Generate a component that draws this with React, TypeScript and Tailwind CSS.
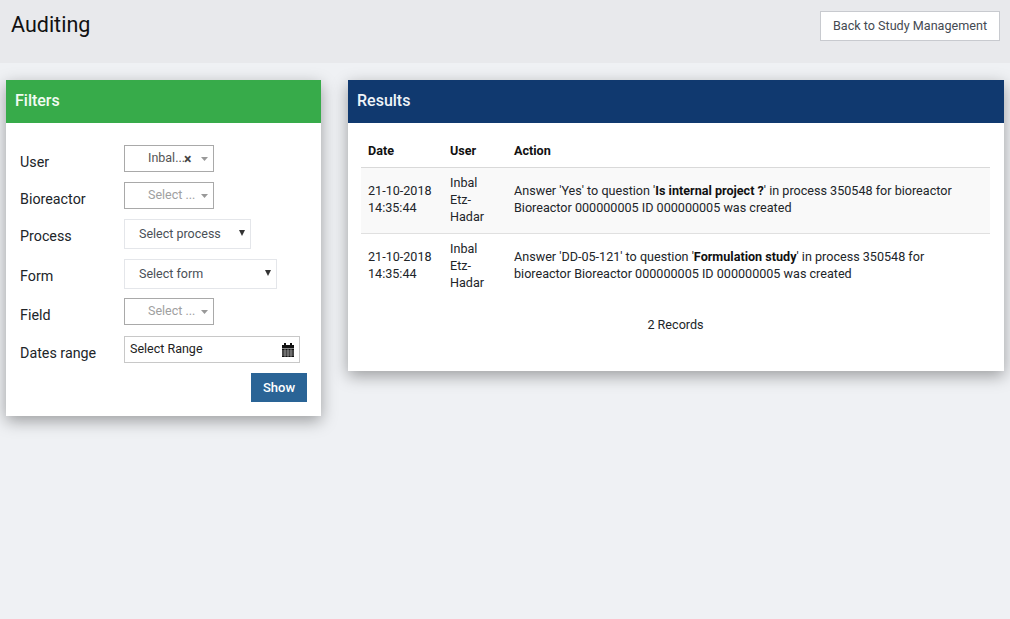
import React from "react";

function Caret({ className }: { className: string }) {
  return (
    <svg viewBox="0 0 8 5" className={className} fill="currentColor" preserveAspectRatio="none">
      <path d="M0 0h8L4 5z" />
    </svg>
  );
}

function CalendarIcon() {
  return (
    <svg viewBox="0 0 12 14" className="h-[14px] w-[12px] text-[#111]" fill="currentColor">
      <path d="M2 0h2v2h4V0h2v2h2v3H0V2h2z" />
      <path d="M0 5.5h12V14H0z" />
      <path d="M0 8h12M0 10h12M0 12h12M3 6v8M6 6v8M9 6v8" stroke="#fff" strokeWidth="0.45" />
    </svg>
  );
}

function FilterLabel({ children }: { children: React.ReactNode }) {
  return <div className="w-[104px] shrink-0 pt-[8px] text-[14.3px] leading-[19px] text-[#212529]">{children}</div>;
}

function MultiSelect({ text, muted, clear }: { text: string; muted?: boolean; clear?: boolean }) {
  return (
    <div className="relative flex h-[27px] w-[90px] items-center border border-[#a9a9a9] bg-white pl-[23px] text-[12.5px]">
      <span className={muted ? "text-[#a0a0a0]" : "text-[#555]"}>{text}</span>
      {clear && <span className="-ml-px text-[14px] font-bold leading-none text-[#444]">×</span>}
      <Caret className="absolute right-[5px] top-[11px] h-[4px] w-[7px] text-[#999]" />
    </div>
  );
}

function NativeSelect({ text, width }: { text: string; width: string }) {
  return (
    <div className={`relative flex h-[30px] items-center border border-[#e4e6ea] bg-white pl-[14px] text-[12.5px] text-[#495057] ${width}`}>
      {text}
      <Caret className="absolute right-[5px] top-[10px] h-[6px] w-[6px] text-[#333]" />
    </div>
  );
}

const rows = [
  { answer: "Yes", question: "Is internal project ?", line: "process 350548 for bioreactor", striped: true },
  { answer: "DD-05-121", question: "Formulation study", line: "process 350548 for", striped: false },
];

export default function App() {
  return (
    <div className="min-h-[619px] bg-[#eff1f4] font-['Roboto',sans-serif]">
      <header className="flex h-[63px] items-start justify-between bg-[#e8e9ec] pl-[11px] pr-[10px] pt-[11px]">
        <h1 className="text-[21.5px] leading-[28px] text-[#111]">Auditing</h1>
        <button
          type="button"
          className="h-[30px] w-[180px] border border-[#c8cacf] bg-white text-[12.6px] text-[#444a52]"
        >
          Back to Study Management
        </button>
      </header>

      <main className="flex items-start px-[6px] pt-[17px]">
        <section className="w-[315px] bg-white shadow-[0_5px_15px_rgba(0,0,0,0.35)]">
          <div className="flex h-[43px] items-center bg-[#37ab4a] px-[9px] pb-[2px] text-[16px] font-medium text-[#f2fbf3]">
            Filters
          </div>
          <div className="px-[14px] pt-[22px] pb-[14px]">
            <div className="flex">
              <FilterLabel>User</FilterLabel>
              <MultiSelect text="Inbal..." clear />
            </div>
            <div className="mt-[10px] flex">
              <FilterLabel>Bioreactor</FilterLabel>
              <MultiSelect text="Select ..." muted />
            </div>
            <div className="mt-[10px] flex">
              <FilterLabel>Process</FilterLabel>
              <NativeSelect text="Select process" width="w-[127px]" />
            </div>
            <div className="mt-[10px] flex">
              <FilterLabel>Form</FilterLabel>
              <NativeSelect text="Select form" width="w-[153px]" />
            </div>
            <div className="mt-[9px] flex">
              <FilterLabel>Field</FilterLabel>
              <MultiSelect text="Select ..." muted />
            </div>
            <div className="mt-[11px] flex">
              <FilterLabel>Dates range</FilterLabel>
              <div className="flex h-[27px] w-[176px] items-center justify-between border border-[#c8c8c8] px-[5px] text-[12.5px] text-[#222]">
                Select Range
                <CalendarIcon />
              </div>
            </div>
            <div className="mt-[10px] flex justify-end">
              <button type="button" className="h-[29px] w-[56px] bg-[#2a6496] text-[13px] font-medium text-white">
                Show
              </button>
            </div>
          </div>
        </section>

        <section className="ml-[27px] w-[656px] bg-white shadow-[0_5px_15px_rgba(0,0,0,0.35)]">
          <div className="flex h-[43px] items-center bg-[#10396f] px-[9px] pb-[2px] text-[16px] font-medium text-[#eef3f8]">
            Results
          </div>
          <div className="pl-[13px] pr-[14px] pt-[10px] pb-[38px]">
            <table className="w-full border-collapse text-[12.6px] leading-[17px] text-[#212529]">
              <thead>
                <tr className="border-b border-[#d9d9d9] text-left text-[#111]">
                  <th className="w-[82px] px-[7px] pt-[9px] pb-[8px] font-bold">Date</th>
                  <th className="w-[63px] px-[7px] pt-[9px] pb-[8px] font-bold">User</th>
                  <th className="pl-[8px] pr-[7px] pt-[9px] pb-[8px] font-bold">Action</th>
                </tr>
              </thead>
              <tbody>
                {rows.map((row) => (
                  <tr key={row.answer} className={`border-b border-[#e0e0e0] last:border-b-0 ${row.striped ? "bg-[#f9f9f9]" : ""}`}>
                    <td className="px-[7px] pt-[6px] pb-[10px] align-middle">
                      21-10-2018
                      <br />
                      14:35:44
                    </td>
                    <td className="px-[7px] pt-[6px] pb-[8px] align-middle">
                      Inbal
                      <br />
                      Etz-
                      <br />
                      Hadar
                    </td>
                    <td className="pl-[8px] pr-[7px] pt-[6px] pb-[10px] align-middle">
                      Answer '{row.answer}' to question '<b className="text-[#111]">{row.question}</b>' in {row.line}
                      <br />
                      {row.striped ? "" : "bioreactor "}Bioreactor 000000005 ID 000000005 was created
                    </td>
                  </tr>
                ))}
              </tbody>
            </table>
            <div className="mt-[17px] text-center text-[12.6px] leading-[17px] text-[#212529]">2 Records</div>
          </div>
        </section>
      </main>
    </div>
  );
}
